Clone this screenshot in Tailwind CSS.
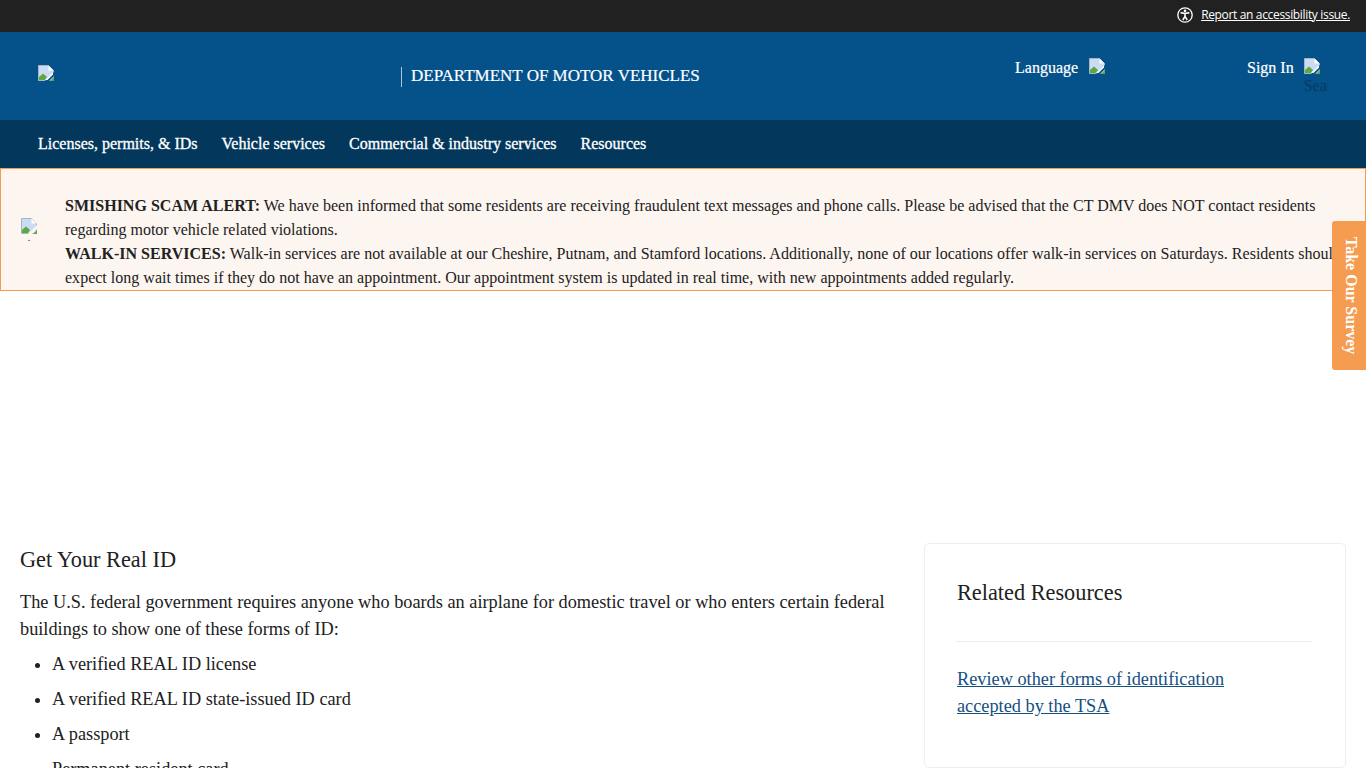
<!DOCTYPE html>
<html lang="en">
<head>
<meta charset="utf-8">
<title>Get Your Real ID</title>
<script src="https://cdn.jsdelivr.net/npm/@tailwindcss/browser@4"></script>
</head>
<body class="font-['Liberation_Serif',serif] text-[#212121] bg-white h-[768px] overflow-hidden relative">
<div class="h-8 bg-[#212121] flex items-center justify-end pr-4 pb-[3px] gap-2">
  <svg width="16" height="16" viewBox="0 0 16 16" fill="none"><circle cx="8" cy="8" r="7.2" stroke="white" stroke-width="1.3"/><circle cx="8" cy="3.9" r="1.3" fill="white"/><path d="M3.6 5.6 L8 6.5 L12.4 5.6 M8 6.5 V9.4 M8 9.4 L5.8 13 M8 9.4 L10.2 13" stroke="white" stroke-width="1.6"/></svg>
  <a class="font-['Open_Sans',sans-serif] text-xs text-white underline tracking-[-0.34px]">Report an accessibility issue.</a>
</div>
<header class="h-[88px] bg-[#05528b] flex text-white relative">
  <div class="w-[401px] shrink-0 pl-[38px] pt-[33px]">
    <svg class="block" width="16" height="16" viewBox="0 0 16 16"><path d="M0.5 0.5H10.5L15.5 5.5V15.5H0.5Z" fill="#c9dbf5" stroke="#a9b4c0"/><path d="M1 15V12L5 8.5L9 12L7 15Z" fill="#5da83f"/><path d="M10.5 0.5V5.5H15.5Z" fill="white"/><path d="M7 16L16 7V11L11 16Z" fill="#05528b"/><path d="M7 15L15 7.5V9.5L9.5 15Z" fill="white"/><path d="M12 16L16 12V16Z" fill="#5da83f"/></svg>
  </div>
  <div class="flex items-center h-[20px] mt-[35px]">
    <span class="w-px h-5 bg-[#a9c6dc]"></span>
    <span class="ml-[9px] -mt-[2px] text-[17px] [-webkit-text-stroke:0.2px_white]">DEPARTMENT OF MOTOR VEHICLES</span>
  </div>
  <div class="absolute left-[1015px] top-[26px] flex items-start">
    <span class="text-base leading-5 [-webkit-text-stroke:0.2px_white]">Language</span>
    <svg class="ml-[11px]" width="16" height="16" viewBox="0 0 16 16"><path d="M0.5 0.5H10.5L15.5 5.5V15.5H0.5Z" fill="#c9dbf5" stroke="#a9b4c0"/><path d="M1 15V12L5 8.5L9 12L7 15Z" fill="#5da83f"/><path d="M10.5 0.5V5.5H15.5Z" fill="white"/><path d="M7 16L16 7V11L11 16Z" fill="#05528b"/><path d="M7 15L15 7.5V9.5L9.5 15Z" fill="white"/><path d="M12 16L16 12V16Z" fill="#5da83f"/></svg>
  </div>
  <div class="absolute left-[1247px] top-[26px] flex items-start">
    <span class="text-base leading-5 [-webkit-text-stroke:0.2px_white]">Sign In</span>
    <div class="ml-[10px] w-6 overflow-hidden">
      <svg class="block" width="16" height="16" viewBox="0 0 16 16"><path d="M0.5 0.5H10.5L15.5 5.5V15.5H0.5Z" fill="#c9dbf5" stroke="#a9b4c0"/><path d="M1 15V12L5 8.5L9 12L7 15Z" fill="#5da83f"/><path d="M10.5 0.5V5.5H15.5Z" fill="white"/><path d="M7 16L16 7V11L11 16Z" fill="#05528b"/><path d="M7 15L15 7.5V9.5L9.5 15Z" fill="white"/><path d="M12 16L16 12V16Z" fill="#5da83f"/></svg>
      <span class="block text-base leading-[24px] text-[#043a60]">Search</span>
    </div>
  </div>
</header>
<nav class="h-12 bg-[#03375c] flex items-center pl-[38px] gap-6 text-white text-base [-webkit-text-stroke:0.3px_white]">
  <a>Licenses, permits, &amp; IDs</a>
  <a>Vehicle services</a>
  <a>Commercial &amp; industry services</a>
  <a>Resources</a>
</nav>
<section class="h-[123px] bg-[#fdf5f0] border border-[#f49d4f] flex overflow-hidden">
  <div class="w-[64px] shrink-0 pl-5 pt-[49px]">
    <svg class="block" width="16" height="16" viewBox="0 0 16 16"><path d="M0.5 0.5H10.5L15.5 5.5V15.5H0.5Z" fill="#c9dbf5" stroke="#a9b4c0"/><path d="M1 15V12L5 8.5L9 12L7 15Z" fill="#5da83f"/><path d="M10.5 0.5V5.5H15.5Z" fill="white"/><path d="M7 16L16 7V11L11 16Z" fill="#fdf5f0"/><path d="M12 16L16 12V16Z" fill="#5da83f"/></svg>
    <span class="block w-4 text-center text-[10px] leading-[8px] pb-0">.</span>
  </div>
  <div class="pt-[25px] text-base leading-6 w-[1290px] shrink-0 tracking-[0.012px]">
    <p><b>SMISHING SCAM ALERT:</b> We have been informed that some residents are receiving fraudulent text messages and phone calls. Please be advised that the CT DMV does NOT contact residents regarding motor vehicle related violations.</p>
    <p><b>WALK-IN SERVICES:</b> Walk-in services are not available at our Cheshire, Putnam, and Stamford locations. Additionally, none of our locations offer walk-in services on Saturdays. Residents should expect long wait times if they do not have an appointment. Our appointment system is updated in real time, with new appointments added regularly.</p>
  </div>
</section>
<a class="absolute right-0 top-[221px] w-[34px] h-[149px] bg-[#f69c50] rounded-l-[3px] flex items-center justify-center pl-1 text-white font-bold text-base [writing-mode:vertical-rl]">Take Our Survey</a>
<main class="flex pl-5 pr-5 pt-[252px] items-start">
  <div class="w-[904px] shrink-0 pr-4">
    <h2 class="text-[22.3px] leading-[32px] pt-px mb-[13px]">Get Your Real ID</h2>
    <p class="text-[18.3px] leading-[27px] mb-2">The U.S. federal government requires anyone who boards an airplane for domestic travel or who enters certain federal buildings to show one of these forms of ID:</p>
    <ul class="list-disc pl-8 text-[18.3px] leading-[27px] flex flex-col gap-2">
      <li>A verified REAL ID license</li>
      <li>A verified REAL ID state-issued ID card</li>
      <li>A passport</li>
      <li>Permanent resident card</li>
    </ul>
  </div>
  <aside class="w-[422px] h-[225px] shrink-0 border border-[#eeeeee] rounded-[5px] px-8 pt-[33px]">
    <h3 class="text-[22.3px] leading-[32px]">Related Resources</h3>
    <div class="border-t border-[#eeeeee] mt-[32px] mb-6 -ml-px w-[356px]"></div>
    <a class="block w-[300px] text-[18.3px] leading-[27px] text-[#14507f] underline">Review other forms of identification accepted by the TSA</a>
  </aside>
</main>
</body>
</html>
